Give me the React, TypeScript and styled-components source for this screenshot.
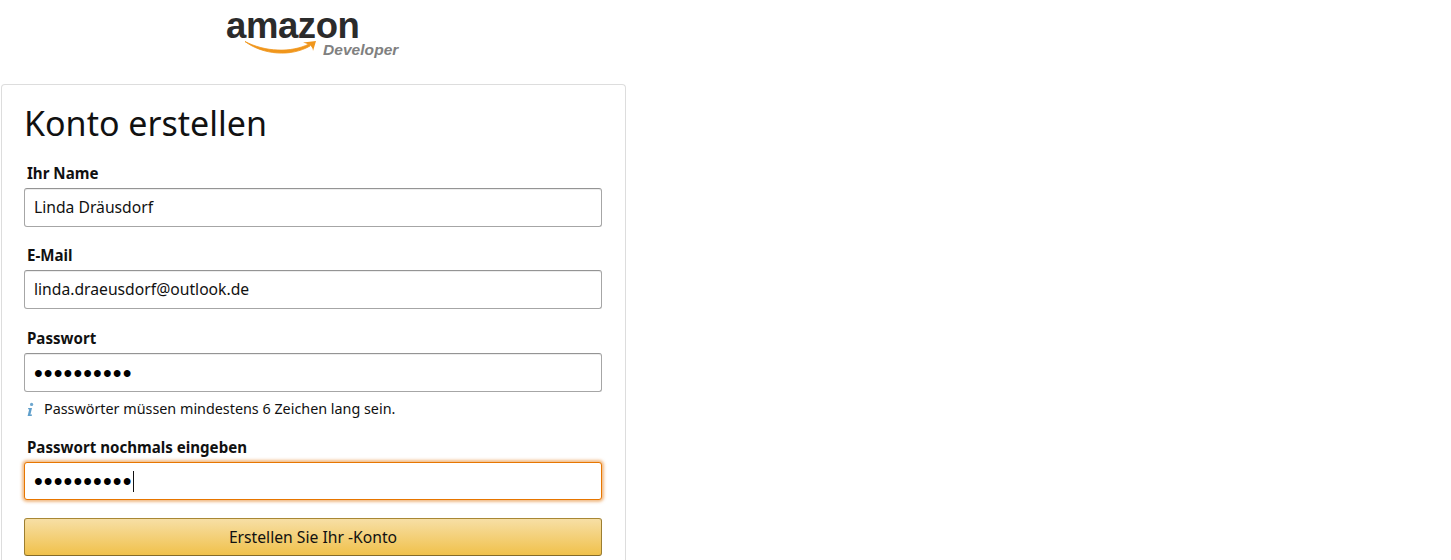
import React from "react";
import styled, { createGlobalStyle } from "styled-components";

const Global = createGlobalStyle`
  html, body { margin: 0; padding: 0; background: #fff; height: 560px; overflow: hidden; }
  body { font-family: "Noto Sans", "Open Sans", Arial, sans-serif; color: #111; }
`;

const Page = styled.div`
  width: 626px;
  padding-left: 1px;
  box-sizing: border-box;
`;

const LogoRow = styled.div`
  height: 84px;
  display: flex;
  padding: 0 0 0 224px;
  box-sizing: border-box;
`;

const Card = styled.section`
  border: 1px solid #ddd;
  border-bottom: 0;
  border-radius: 4px 4px 0 0;
  padding: 15px 23px 0 22px;
  height: 476px;
  box-sizing: border-box;
`;

const Title = styled.h1`
  margin: 0 0 18px;
  font-size: 34px;
  line-height: 46px;
  font-weight: 400;
  color: #111;
`;

const Field = styled.div<{ $gap: number }>`
  margin-bottom: ${(p) => p.$gap}px;
`;

const Label = styled.label`
  display: block;
  padding-left: 3px;
  font-size: 15.1px;
  line-height: 18px;
  font-weight: 700;
  color: #111;
  margin-bottom: 6px;
`;

const InputBox = styled.div<{ $focus?: boolean }>`
  height: ${(p) => (p.$focus ? 38 : 39)}px;
  box-sizing: border-box;
  border: 1px solid ${(p) => (p.$focus ? "#e77600" : "#a6a6a6")};
  border-top-color: ${(p) => (p.$focus ? "#e77600" : "#949494")};
  border-radius: 3px;
  padding: 0 9px;
  display: flex;
  align-items: center;
  background: #fff;
  box-shadow: ${(p) =>
    p.$focus
      ? "0 0 3px 2px rgba(228,121,17,.5)"
      : "0 1px 0 rgba(0,0,0,.07) inset"};
`;

const Value = styled.span`
  font-size: 15.7px;
  line-height: 20px;
  margin-bottom: 2px;
  color: #111;
`;

const Dots = styled.span`
  font-family: "Liberation Sans", Arial, sans-serif;
  font-size: 25px;
  line-height: 20px;
  letter-spacing: 1.1px;
  color: #000;
`;

const Caret = styled.span`
  display: inline-block;
  width: 1px;
  height: 21px;
  background: #111;
`;

const Hint = styled.div`
  display: flex;
  align-items: center;
  gap: 9px;
  margin-top: 7px;
  padding-left: 2px;
  font-size: 14.35px;
  line-height: 20px;
  color: #111;
`;

const Submit = styled.button`
  display: block;
  width: 100%;
  height: 38px;
  box-sizing: border-box;
  border: 1px solid;
  border-color: #a88734 #9c7e31 #846a29;
  border-radius: 3px;
  background: linear-gradient(to bottom, #f7dfa5, #f0c14b);
  font: 400 15.7px "Noto Sans", sans-serif;
  color: #111;
  padding: 0;
`;

const Logo = () => (
  <svg width="178" height="60" viewBox="0 0 178 60" aria-label="amazon Developer">
    <text x="1" y="38" fontFamily="Liberation Sans, Arial, sans-serif" fontWeight="700" fontSize="36.5" letterSpacing="-0.4" fill="#2b2b2b">amazon</text>
    <path d="M20 41.5 C 40 52, 66 53, 84 44 L 85 46 C 66 57, 38 55, 20 41.5 Z" fill="#f0961c" stroke="#f0961c" strokeWidth="0.8" />
    <path d="M78 42.5 L 91 41 L 88 51 C 88 47, 85 44, 78 42.5 Z" fill="#f0961c" />
    <text x="98" y="55" fontFamily="Liberation Sans, Arial, sans-serif" fontWeight="700" fontStyle="italic" fontSize="15.5" letterSpacing="0.05" fill="#808080">Developer</text>
  </svg>
);

const InfoIcon = () => (
  <svg width="9" height="15" viewBox="0 0 9 15">
    <circle cx="5.6" cy="2.4" r="1.6" fill="#6ea7cf" />
    <path d="M2.2 6 H6 L4.4 12.6 H6 L5.7 14 H1.6 L3.2 7.2 H2 Z" fill="#5f9fcb" />
  </svg>
);

export default function App() {
  return (
    <Page>
      <Global />
      <LogoRow><Logo /></LogoRow>
      <Card>
        <Title>Konto erstellen</Title>
        <Field $gap={19}>
          <Label>Ihr Name</Label>
          <InputBox><Value>Linda Dräusdorf</Value></InputBox>
        </Field>
        <Field $gap={20}>
          <Label>E-Mail</Label>
          <InputBox><Value>linda.draeusdorf@outlook.de</Value></InputBox>
        </Field>
        <Field $gap={19}>
          <Label>Passwort</Label>
          <InputBox><Dots>••••••••••</Dots></InputBox>
          <Hint><InfoIcon />Passwörter müssen mindestens 6 Zeichen lang sein.</Hint>
        </Field>
        <Field $gap={18}>
          <Label>Passwort nochmals eingeben</Label>
          <InputBox $focus><Dots>••••••••••</Dots><Caret /></InputBox>
        </Field>
        <Submit>Erstellen Sie Ihr -Konto</Submit>
      </Card>
    </Page>
  );
}
